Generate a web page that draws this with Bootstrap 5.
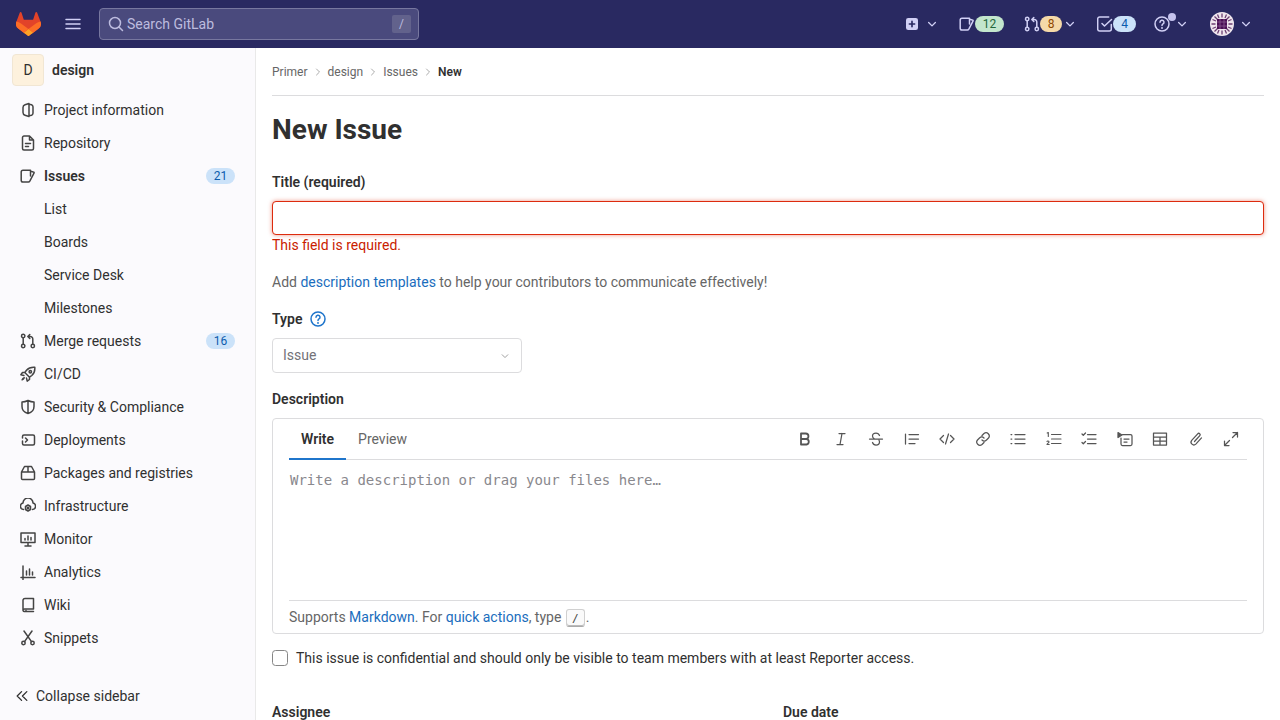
<!DOCTYPE html>
<html lang="en">
  <head>
    <meta charset="UTF-8" />
    <meta name="viewport" content="width=device-width, initial-scale=1.0" />
    <title>New Issue</title>
    <link
      rel="stylesheet"
      href="https://cdn.jsdelivr.net/npm/bootstrap@5.3.0/dist/css/bootstrap.min.css"
    />
    <style>
      html,
      body {
        height: 720px;
        overflow: hidden;
      }
      body {
        font-family: Roboto, "Liberation Sans", sans-serif;
        font-size: 14px;
        color: #303030;
        background: #fff;
      }
      svg.ico {
        width: 16px;
        height: 16px;
        flex: none;
        fill: none;
        stroke: currentColor;
        stroke-width: 1.5;
        stroke-linecap: round;
        stroke-linejoin: round;
      }
      .top-bar {
        height: 48px;
        background: #292961;
        color: #d1d0f5;
      }
      .top-logo {
        width: 25px;
        height: 24px;
        margin-left: 16px;
      }
      .top-burger {
        margin-left: 24px;
        margin-right: 18px;
      }
      .top-search {
        width: 320px;
        height: 32px;
        background: #4a4a7d;
        border: 1px solid #77779f;
        border-radius: 4px;
        padding: 0 7px 0 8px;
        color: #bdbcdf;
      }
      .top-search span {
        margin-left: 3px;
      }
      .slash-key {
        width: 19px;
        height: 18px;
        background: #62628c;
        border-radius: 2px;
        font-size: 12px;
        line-height: 18px;
        text-align: center;
        margin-left: auto !important;
      }
      .top-actions {
        margin-left: auto;
        padding-right: 28px;
      }
      svg.top-chev {
        width: 12px;
        height: 12px;
        stroke-width: 1.7;
      }
      svg.top-plus {
        width: 12px;
        height: 12px;
      }
      .top-count {
        height: 16px;
        border-radius: 8px;
        font-size: 12px;
        line-height: 16px;
        text-align: center;
      }
      .count-green {
        width: 29px;
        background: #c3e6cd;
        color: #24663b;
      }
      .count-orange {
        width: 22px;
        background: #f5d9a8;
        color: #8f4700;
      }
      .count-blue {
        width: 23px;
        background: #cbe2f9;
        color: #0b5cad;
      }
      .help-wrap {
        position: relative;
        display: flex;
      }
      .help-dot {
        position: absolute;
        width: 8px;
        height: 8px;
        border-radius: 50%;
        background: #c5c3ee;
        left: 14px;
        top: -3px;
      }
      .app-body {
        height: 672px;
      }
      .side-bar {
        width: 256px;
        flex: none;
        background: #fbfafd;
        border-right: 1px solid #e9e9e9;
        color: #303030;
      }
      .side-head {
        height: 46px;
        padding: 6px 12px 0;
      }
      .side-avatar {
        width: 32px;
        height: 32px;
        border-radius: 4px;
        background: #fdf1dd;
        border: 1px solid #f1e6d3;
        color: #303030;
        line-height: 30px;
        text-align: center;
        font-size: 14px;
      }
      .side-item {
        height: 32px;
        margin-bottom: 1px;
        padding: 0 20px;
        gap: 8px;
        color: #303030;
        text-decoration: none;
      }
      .side-item svg {
        color: #444;
      }
      .side-sub {
        padding-left: 44px;
      }
      .side-count {
        margin-left: auto;
        width: 29px;
        height: 16px;
        line-height: 16px;
        border-radius: 8px;
        background: #cbe2f9;
        color: #0b5cad;
        font-size: 12px;
        text-align: center;
      }
      .side-collapse {
        height: 48px;
        padding-left: 15px;
        gap: 7px;
        color: #303030;
      }
      .main-pane {
        padding: 0 16px;
        min-width: 0;
      }
      .crumbs {
        height: 48px;
        border-bottom: 1px solid #dcdcde;
        font-size: 12px;
        color: #666;
        gap: 6px;
      }
      .crumbs svg {
        width: 8px;
        height: 8px;
        color: #aaa;
        stroke-width: 2;
      }
      .page-title {
        font-size: 28px;
        font-weight: 700;
        line-height: 36px;
        margin: 16px 0 0;
        color: #303030;
      }
      .field-label {
        font-weight: 600;
        line-height: 20px;
        margin: 0;
        color: #303030;
      }
      .title-input {
        height: 34px;
        margin-top: 9px;
        border: 1px solid #dd2b0e;
        border-radius: 4px;
        box-shadow: 0 0 4px rgba(221, 43, 14, 0.5);
      }
      .error-text {
        color: #c91c00;
        line-height: 20px;
      }
      .hint-text {
        color: #666;
        line-height: 20px;
        margin-top: 17px;
      }
      a.blue-link {
        color: #1a6dbd;
        text-decoration: none;
      }
      .type-select {
        width: 250px;
        height: 35px;
        border: 1px solid #dcdcde;
        border-radius: 4px;
        padding: 0 11px 0 10px;
        color: #737278;
        margin-top: 9px;
      }
      .type-select svg.ico {
        width: 10px;
        height: 10px;
        color: #999;
      }
      .editor-box {
        height: 216px;
        margin-top: 9px;
        border: 1px solid #dcdcde;
        border-radius: 4px;
        padding: 0 16px;
      }
      .editor-head {
        height: 41px;
        border-bottom: 1px solid #dcdcde;
      }
      .editor-tab {
        height: 41px;
        padding: 0 12px;
        line-height: 40px;
        color: #666;
      }
      .editor-tab.is-on {
        color: #303030;
        font-weight: 600;
        border-bottom: 2px solid #1f75cb;
      }
      .editor-tools {
        margin-left: auto;
        margin-right: -2px;
        color: #555;
      }
      .tool-btn {
        width: 35.5px;
        height: 40px;
      }
      .tool-btn svg.ico {
        stroke-width: 1.25;
      }
      .editor-text {
        height: 140px;
        border: 0;
        border-radius: 0;
        padding: 10px 1px;
        resize: none;
        font-family: "DejaVu Sans Mono", monospace;
        font-size: 14px;
        line-height: 20px;
      }
      .editor-text::placeholder {
        color: #89888d;
      }
      .editor-foot {
        height: 34px;
        border-top: 1px solid #dcdcde;
        color: #666;
      }
      .editor-foot kbd {
        display: inline-block;
        width: 19px;
        height: 18px;
        margin: 0 1px;
        padding: 0;
        background: #fafafa;
        border: 1px solid #d0d0d0;
        border-bottom-color: #aaa;
        border-radius: 3px;
        box-shadow: inset 0 -1px 0 #bbb;
        color: #444;
        font-family: "DejaVu Sans Mono", monospace;
        font-size: 11px;
        line-height: 17px;
        text-align: center;
        vertical-align: middle;
      }
      .confid-row {
        margin-top: 14px;
        line-height: 20px;
        color: #303030;
        gap: 8px;
      }
      .confid-row input {
        width: 16px;
        height: 16px;
        margin: 0;
        border-color: #868686;
        border-radius: 3px;
      }
      .lower-fields {
        --bs-gutter-x: 30px;
        margin-top: 34px;
      }
    </style>
  </head>
  <body>
    <svg width="0" height="0" class="position-absolute">
      <defs>
        <symbol id="i-chev" viewBox="0 0 16 16"><path d="M3.5 6l4.5 4.5L12.5 6" /></symbol>
        <symbol id="i-right" viewBox="0 0 16 16"><path d="M5 2l6 6-6 6" /></symbol>
        <symbol id="i-issues" viewBox="0 0 16 16"><path d="M10.5 2.200H3A1.800 1.800 0 0 0 1.200 4v8.200A1.800 1.800 0 0 0 3 14h5.500c.6 0 1-.3 1.300-.8l4.200-8c.3-.5 0-1.200-.6-1.300l-2.900-.6zM10.500 2.200V8" /></symbol>
        <symbol id="i-merge" viewBox="0 0 16 16"><circle cx="3.200" cy="3" r="1.700" /><circle cx="3.200" cy="13" r="1.700" /><circle cx="12.800" cy="13" r="1.700" /><path d="M3.200 4.700v6.600M12.800 11.300V6a2.500 2.500 0 0 0-2.500-2.500H8M9.800 1.500L7.800 3.500l2 2" /></symbol>
        <symbol id="i-todo" viewBox="0 0 16 16"><path d="M14.300 8.500V13a2 2 0 0 1-2 2H2.700a2 2 0 0 1-2-2V3a2 2 0 0 1 2-2h9M5 7.500l2.500 2.500 7-6.500" /></symbol>
        <symbol id="i-help" viewBox="0 0 16 16"><circle cx="8" cy="8" r="7" /><path d="M6 6.200a2 2 0 1 1 3 1.700c-.7.400-1 .800-1 1.600" /><path d="M8 11.800v.2" stroke-width="1.800" /></symbol>
        <symbol id="i-search" viewBox="0 0 16 16"><circle cx="7" cy="7" r="5.500" /><path d="M11 11l3.500 3.500" /></symbol>
        <symbol id="i-project" viewBox="0 0 16 16"><path d="M9 1.500L5 2.800C3.800 3.200 3 4.300 3 5.500v5c0 1.200.8 2.300 2 2.700l4 1.300zM9 2.500h1.500A2.500 2.500 0 0 1 13 5v6a2.500 2.500 0 0 1-2.500 2.500H9" /></symbol>
        <symbol id="i-repo" viewBox="0 0 16 16"><path d="M9.500 1H4a1.500 1.500 0 0 0-1.500 1.500v11A1.500 1.500 0 0 0 4 15h8a1.500 1.500 0 0 0 1.500-1.500V5zM9.500 1v4h4M5.500 8.500h5M5.500 11.500h3" /></symbol>
        <symbol id="i-rocket" viewBox="0 0 16 16"><path d="M14.800 1.200c-3.500-.3-6.300.7-8.300 3L4.800 6.500l4.700 4.700 2.300-1.700c2.300-2 3.300-4.800 3-8.300zM4.800 6.500H2.500L.9 8.800l3 .7M9.500 11.200v2.300l-2.300 1.600-.7-3M4.200 11.800c-1 .3-1.800 1.300-2 2 .7-.2 1.700-1 2-2z" /><circle cx="10.300" cy="5.700" r="1.200" /></symbol>
        <symbol id="i-shield" viewBox="0 0 16 16"><path d="M8 1.500c2 1 4 1.500 6 1.500v4.500c0 3.500-2.500 6-6 7-3.500-1-6-3.500-6-7V3c2 0 4-.5 6-1.500zM8 2v12" /></symbol>
        <symbol id="i-deploy" viewBox="0 0 16 16"><path d="M2.500 6V4.500a1.500 1.500 0 0 1 1.500-1.500h9A1.500 1.500 0 0 1 14.500 4.500v7a1.500 1.500 0 0 1-1.500 1.500H4a1.500 1.500 0 0 1-1.500-1.500V9M5.500 6l2 2-2 2" /></symbol>
        <symbol id="i-package" viewBox="0 0 16 16"><path d="M1.500 7h13v6.500a1 1 0 0 1-1 1h-11a1 1 0 0 1-1-1zM1.500 7l3-5.500h7l3 5.500M8 1.500V7" /></symbol>
        <symbol id="i-infra" viewBox="0 0 16 16"><path d="M3.500 11.500A3.300 3.300 0 0 1 3 5a5 5 0 0 1 10 0 3.300 3.300 0 0 1-.500 6.500M8 7l2.500 1.500v3L8 13l-2.500-1.500v-3z" /><circle cx="8" cy="10" r=".8" /></symbol>
        <symbol id="i-monitor" viewBox="0 0 16 16"><path d="M1 2h14v9.500H1zM5 15h6M8 11.500V15M5 9V7.500M8 9V5M11 9V6.500" /></symbol>
        <symbol id="i-chart" viewBox="0 0 16 16"><path d="M1 13.500h14M3 2v13.500M6.500 7v4M9.500 5v6M12.500 8v3" /></symbol>
        <symbol id="i-book" viewBox="0 0 16 16"><path d="M3 13V3a2 2 0 0 1 2-1.500h8.500V12H4.500A1.500 1.500 0 0 0 3 13.500 1.500 1.500 0 0 0 4.500 14.500H13.500M6 14.500v-1" /></symbol>
        <symbol id="i-scissors" viewBox="0 0 16 16"><circle cx="3.500" cy="13" r="1.700" /><circle cx="12.500" cy="13" r="1.700" /><path d="M4.500 11.600L12 1M11.500 11.600L4 1" /></symbol>
        <symbol id="i-dbl" viewBox="0 0 16 16"><path d="M7.500 3L2.500 8l5 5M13.500 3l-5 5 5 5" /></symbol>
        <symbol id="i-bold" viewBox="0 0 16 16"><path d="M4 2.500h4.700a2.700 2.700 0 0 1 0 5.500H4zM4 8h5.500a2.800 2.800 0 0 1 0 5.500H4z" stroke-width="1.800" /></symbol>
        <symbol id="i-italic" viewBox="0 0 16 16"><path d="M6 2.500h6M4 13.500h6M9 2.500L7 13.500" /></symbol>
        <symbol id="i-strike" viewBox="0 0 16 16"><path d="M1.500 8h13M11.500 4.500C11 3 9.700 2 8 2 6 2 4.500 3.200 4.500 5c0 1 .5 2 1.500 2.500M4.500 11.500C5 13 6.300 14 8 14c2 0 3.500-1.200 3.500-3 0-.7-.2-1.300-.5-1.800" /></symbol>
        <symbol id="i-quote" viewBox="0 0 16 16"><path d="M1.500 3v10M5 3.500h9.500M5 8h9.500M5 12.500h6" /></symbol>
        <symbol id="i-code" viewBox="0 0 16 16"><path d="M4.500 4.500L1 8l3.500 3.500M11.500 4.500L15 8l-3.500 3.500M9.500 3l-3 10" /></symbol>
        <symbol id="i-link" viewBox="0 0 16 16"><path d="M7 4.500l2-2a3.200 3.200 0 0 1 4.500 4.500l-2 2a3.200 3.200 0 0 1-4.500 0M9 11.500l-2 2A3.200 3.200 0 0 1 2.500 9l2-2a3.200 3.200 0 0 1 4.500 0" /></symbol>
        <symbol id="i-ul" viewBox="0 0 16 16"><path d="M5 3.500h10M5 8h10M5 12.500h10M1 3.500h.8M1 8h.8M1 12.500h.8" /></symbol>
        <symbol id="i-ol" viewBox="0 0 16 16"><path d="M5.500 3.500H15M5.500 8H15M5.500 12.500H15M1.200 2L2.300 1.500V5.500M1 10.500c.3-.7 2-.6 2 .4 0 .9-2 1.600-2 2.600h2.200" stroke-width="1.100" /></symbol>
        <symbol id="i-task" viewBox="0 0 16 16"><path d="M6.500 3.500H15M6.500 8H15M6.500 12.500H15M1 3l1.300 1.300L4.500 2M1 11.500l1.300 1.300L4.500 10.500" /></symbol>
        <symbol id="i-details" viewBox="0 0 16 16"><path d="M5.500 3.500h8A1.500 1.500 0 0 1 15 5v8a1.500 1.500 0 0 1-1.500 1.500h-8A1.500 1.500 0 0 1 4 13V7M7 8h5M7 11h3" /><path d="M1 1.500l4 2.500-4 2.500z" fill="currentColor" /></symbol>
        <symbol id="i-table" viewBox="0 0 16 16"><path d="M1.500 2h13v12h-13zM1.500 6h13M1.500 10h13M8 6v8" /></symbol>
        <symbol id="i-clip" viewBox="0 0 16 16"><path d="M6.500 10.500l5.300-5.800a1.400 1.400 0 0 0-2.100-1.900L3.700 9.300a2.800 2.800 0 0 0 4.100 3.800l5.700-6.200" /></symbol>
        <symbol id="i-expand" viewBox="0 0 16 16"><path d="M10 1.500h4.500V6M14.500 1.500L9.500 6.500M6 14.500H1.500V10M1.500 14.500l5-5" /></symbol>
      </defs>
    </svg>

    <header class="top-bar d-flex align-items-center">
      <svg class="top-logo" viewBox="0 0 25 24">
        <path d="M24.507 9.5l-.034-.09L21.082.562a.896.896 0 00-1.694.091l-2.29 7.01H7.825L5.535.653a.898.898 0 00-1.694-.09L.451 9.411.416 9.5a6.297 6.297 0 002.09 7.278l.012.01.03.022 5.16 3.867 2.56 1.935 1.554 1.176a1.051 1.051 0 001.268 0l1.555-1.176 2.56-1.935 5.197-3.89.014-.01A6.297 6.297 0 0024.507 9.5z" fill="#E24329" />
        <path d="M24.507 9.5l-.034-.09a11.44 11.44 0 00-4.56 2.051l-7.447 5.632 4.742 3.584 5.197-3.89.014-.01A6.297 6.297 0 0024.507 9.5z" fill="#FC6D26" />
        <path d="M7.707 20.677l2.56 1.935 1.555 1.176a1.051 1.051 0 001.268 0l1.555-1.176 2.56-1.935-4.743-3.584-4.755 3.584z" fill="#FCA326" />
        <path d="M5.01 11.461a11.43 11.43 0 00-4.56-2.05L.416 9.5a6.297 6.297 0 002.09 7.278l.012.01.03.022 5.16 3.867 4.745-3.584-7.444-5.632z" fill="#FC6D26" />
      </svg>
      <svg class="ico top-burger" viewBox="0 0 16 16"><path d="M1 3.500h14M1 8h14M1 12.500h14" /></svg>
      <div class="top-search d-flex align-items-center">
        <svg class="ico"><use href="#i-search" /></svg>
        <span>Search GitLab</span>
        <span class="slash-key">/</span>
      </div>
      <div class="top-actions d-flex align-items-center">
        <svg class="ico top-plus" viewBox="0 0 16 16"><rect x="0" y="0" width="16" height="16" rx="3" fill="#d1d0f5" stroke="none" /><path d="M8 4.500v7M4.500 8h7" stroke="#292961" stroke-width="2.200" /></svg>
        <svg class="ico top-chev ms-2"><use href="#i-chev" /></svg>
        <svg class="ico" style="margin-left: 21px"><use href="#i-issues" /></svg>
        <span class="top-count count-green">12</span>
        <svg class="ico" style="margin-left: 20px"><use href="#i-merge" /></svg>
        <span class="top-count count-orange">8</span>
        <svg class="ico top-chev" style="margin-left: 2px"><use href="#i-chev" /></svg>
        <svg class="ico" style="margin-left: 21px"><use href="#i-todo" /></svg>
        <span class="top-count count-blue">4</span>
        <span class="help-wrap" style="margin-left: 18px">
          <svg class="ico"><use href="#i-help" /></svg>
          <span class="help-dot"></span>
        </span>
        <svg class="ico top-chev" style="margin-left: 6px"><use href="#i-chev" /></svg>
        <svg style="margin-left: 22px" width="24" height="24" viewBox="0 0 24 24">
          <circle cx="12" cy="12" r="12" fill="#efe6ee" />
          <path d="M12 1.500v4M12 18.500v4M1.500 12h4M18.500 12h4M4.500 4.500l3 3M19.500 4.500l-3 3M4.500 19.500l3-3M19.500 19.500l-3-3M7.500 2.500l1.500 3.500M16.500 2.500L15 6M7.500 21.500L9 18M16.500 21.500L15 18M2.500 7.500L6 9M21.500 7.500L18 9M2.500 16.500L6 15M21.500 16.500L18 15" stroke="#6b3f72" stroke-width="1.300" />
          <rect x="7" y="7" width="10" height="10" fill="#4a0f55" />
          <path d="M10 7v10M14 7v10M7 10h10M7 14h10" stroke="#8a5a92" stroke-width=".8" />
        </svg>
        <svg class="ico top-chev" style="margin-left: 6px"><use href="#i-chev" /></svg>
      </div>
    </header>

    <div class="app-body d-flex">
      <aside class="side-bar d-flex flex-column">
        <div class="side-head d-flex">
          <div class="side-avatar">D</div>
          <strong class="ms-2 fw-semibold" style="line-height: 32px">design</strong>
        </div>
        <a class="side-item d-flex align-items-center" href="#"><svg class="ico"><use href="#i-project" /></svg>Project information</a>
        <a class="side-item d-flex align-items-center" href="#"><svg class="ico"><use href="#i-repo" /></svg>Repository</a>
        <a class="side-item d-flex align-items-center fw-semibold" href="#"><svg class="ico"><use href="#i-issues" /></svg>Issues<span class="side-count fw-normal">21</span></a>
        <a class="side-item side-sub d-flex align-items-center" href="#">List</a>
        <a class="side-item side-sub d-flex align-items-center" href="#">Boards</a>
        <a class="side-item side-sub d-flex align-items-center" href="#">Service Desk</a>
        <a class="side-item side-sub d-flex align-items-center" href="#">Milestones</a>
        <a class="side-item d-flex align-items-center" href="#"><svg class="ico"><use href="#i-merge" /></svg>Merge requests<span class="side-count">16</span></a>
        <a class="side-item d-flex align-items-center" href="#"><svg class="ico"><use href="#i-rocket" /></svg>CI/CD</a>
        <a class="side-item d-flex align-items-center" href="#"><svg class="ico"><use href="#i-shield" /></svg>Security &amp; Compliance</a>
        <a class="side-item d-flex align-items-center" href="#"><svg class="ico"><use href="#i-deploy" /></svg>Deployments</a>
        <a class="side-item d-flex align-items-center" href="#"><svg class="ico"><use href="#i-package" /></svg>Packages and registries</a>
        <a class="side-item d-flex align-items-center" href="#"><svg class="ico"><use href="#i-infra" /></svg>Infrastructure</a>
        <a class="side-item d-flex align-items-center" href="#"><svg class="ico"><use href="#i-monitor" /></svg>Monitor</a>
        <a class="side-item d-flex align-items-center" href="#"><svg class="ico"><use href="#i-chart" /></svg>Analytics</a>
        <a class="side-item d-flex align-items-center" href="#"><svg class="ico"><use href="#i-book" /></svg>Wiki</a>
        <a class="side-item d-flex align-items-center" href="#"><svg class="ico"><use href="#i-scissors" /></svg>Snippets</a>
        <div class="side-collapse d-flex align-items-center mt-auto">
          <svg class="ico" style="width: 14px; height: 14px"><use href="#i-dbl" /></svg>
          Collapse sidebar
        </div>
      </aside>

      <main class="main-pane flex-grow-1">
        <nav class="crumbs d-flex align-items-center">
          <span>Primer</span><svg class="ico"><use href="#i-right" /></svg>
          <span>design</span><svg class="ico"><use href="#i-right" /></svg>
          <span>Issues</span><svg class="ico"><use href="#i-right" /></svg>
          <span class="fw-semibold" style="color: #303030">New</span>
        </nav>
        <h1 class="page-title">New Issue</h1>

        <p class="field-label" style="margin-top: 24px">Title (required)</p>
        <input class="form-control title-input" type="text" />
        <div class="error-text">This field is required.</div>
        <div class="hint-text">
          Add <a class="blue-link" href="#">description templates</a> to help your contributors to communicate effectively!
        </div>

        <div class="field-label d-flex align-items-center" style="margin-top: 17px">
          Type
          <svg class="ico ms-2" style="color: #1f75cb"><use href="#i-help" /></svg>
        </div>
        <div class="type-select d-flex align-items-center justify-content-between">
          Issue
          <svg class="ico"><use href="#i-chev" /></svg>
        </div>

        <p class="field-label" style="margin-top: 16px">Description</p>
        <div class="editor-box">
          <div class="editor-head d-flex">
            <div class="editor-tab is-on">Write</div>
            <div class="editor-tab">Preview</div>
            <div class="editor-tools d-flex">
              <span class="tool-btn d-flex align-items-center justify-content-center"><svg class="ico"><use href="#i-bold" /></svg></span>
              <span class="tool-btn d-flex align-items-center justify-content-center"><svg class="ico"><use href="#i-italic" /></svg></span>
              <span class="tool-btn d-flex align-items-center justify-content-center"><svg class="ico"><use href="#i-strike" /></svg></span>
              <span class="tool-btn d-flex align-items-center justify-content-center"><svg class="ico"><use href="#i-quote" /></svg></span>
              <span class="tool-btn d-flex align-items-center justify-content-center"><svg class="ico"><use href="#i-code" /></svg></span>
              <span class="tool-btn d-flex align-items-center justify-content-center"><svg class="ico"><use href="#i-link" /></svg></span>
              <span class="tool-btn d-flex align-items-center justify-content-center"><svg class="ico"><use href="#i-ul" /></svg></span>
              <span class="tool-btn d-flex align-items-center justify-content-center"><svg class="ico"><use href="#i-ol" /></svg></span>
              <span class="tool-btn d-flex align-items-center justify-content-center"><svg class="ico"><use href="#i-task" /></svg></span>
              <span class="tool-btn d-flex align-items-center justify-content-center"><svg class="ico"><use href="#i-details" /></svg></span>
              <span class="tool-btn d-flex align-items-center justify-content-center"><svg class="ico"><use href="#i-table" /></svg></span>
              <span class="tool-btn d-flex align-items-center justify-content-center"><svg class="ico"><use href="#i-clip" /></svg></span>
              <span class="tool-btn d-flex align-items-center justify-content-center"><svg class="ico"><use href="#i-expand" /></svg></span>
            </div>
          </div>
          <textarea class="form-control editor-text shadow-none" placeholder="Write a description or drag your files here…"></textarea>
          <div class="editor-foot d-flex align-items-center">
            <span>Supports <a class="blue-link" href="#">Markdown</a>. For <a class="blue-link" href="#">quick actions</a>, type <kbd>/</kbd>.</span>
          </div>
        </div>

        <label class="confid-row d-flex align-items-center">
          <input class="form-check-input" type="checkbox" />
          This issue is confidential and should only be visible to team members with at least Reporter access.
        </label>

        <div class="row lower-fields">
          <div class="col-6 field-label">Assignee</div>
          <div class="col-6 field-label">Due date</div>
        </div>
      </main>
    </div>

    <script src="https://cdn.jsdelivr.net/npm/bootstrap@5.3.0/dist/js/bootstrap.bundle.min.js"></script>
  </body>
</html>
